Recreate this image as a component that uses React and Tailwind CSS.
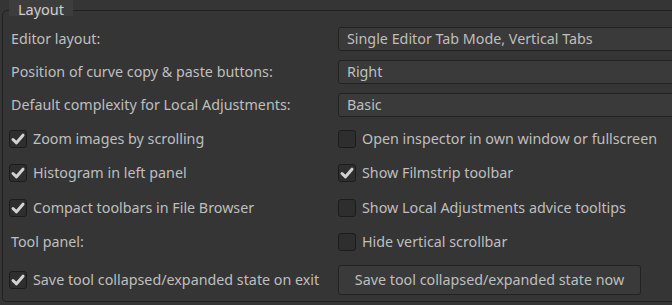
import React from "react";

function Check({ checked }) {
  return (
    <span className="flex h-[18px] w-[18px] shrink-0 items-center justify-center rounded-[3px] border border-[#1c1c1c] bg-[#2e2e2e]">
      {checked && (
        <svg width="16" height="16" viewBox="0 0 16 16">
          <path d="M3 8.5 L6.5 11.8 L13 4.2" fill="none" stroke="#d2d2d2" strokeWidth="3" strokeLinecap="round" strokeLinejoin="round" />
        </svg>
      )}
    </span>
  );
}

function CheckRow({ checked, label }) {
  return (
    <div className="flex items-center gap-[6px]">
      <Check checked={checked} />
      <span className="whitespace-nowrap">{label}</span>
    </div>
  );
}

function Combo({ value }) {
  return (
    <div className="flex h-[24px] w-[400px] items-center rounded-[3px] border border-[#222] bg-[#3a3a3a] pl-[8px] whitespace-nowrap">
      {value}
    </div>
  );
}

export default function App() {
  return (
    <div
      className="relative h-[305px] w-[672px] overflow-hidden bg-[#353535] text-[14.3px] text-[#bfbfbf]"
      style={{ fontFamily: '"Noto Sans", "Open Sans", sans-serif' }}
    >
      <div className="ml-[2px] mt-[10px] flex h-[292px] w-[720px] flex-col rounded-tl-[5px] rounded-bl-[4px] border border-[#222] pl-[6px] pt-[11px]">
        <div className="grid grid-cols-[329px_1fr]">
          <div className="flex h-[33px] items-center pl-[2px]">Editor layout:</div>
          <div className="flex h-[33px] items-center"><Combo value="Single Editor Tab Mode, Vertical Tabs" /></div>
          <div className="flex h-[33px] items-center pl-[2px]">Position of curve copy &amp; paste buttons:</div>
          <div className="flex h-[33px] items-center"><Combo value="Right" /></div>
          <div className="flex h-[33px] items-center pl-[2px]">Default complexity for Local Adjustments:</div>
          <div className="flex h-[33px] items-center"><Combo value="Basic" /></div>

          <div className="flex h-[35px] items-center"><CheckRow checked label="Zoom images by scrolling" /></div>
          <div className="flex h-[35px] items-center"><CheckRow label="Open inspector in own window or fullscreen" /></div>
          <div className="flex h-[34px] items-center"><CheckRow checked label="Histogram in left panel" /></div>
          <div className="flex h-[34px] items-center"><CheckRow checked label="Show Filmstrip toolbar" /></div>
          <div className="flex h-[35px] items-center"><CheckRow checked label="Compact toolbars in File Browser" /></div>
          <div className="flex h-[35px] items-center"><CheckRow label="Show Local Adjustments advice tooltips" /></div>
          <div className="flex h-[34px] items-center pl-[2px]">Tool panel:</div>
          <div className="flex h-[34px] items-center"><CheckRow label="Hide vertical scrollbar" /></div>
          <div className="flex h-[42px] items-center"><CheckRow checked label="Save tool collapsed/expanded state on exit" /></div>
          <div className="flex h-[42px] items-center">
            <button className="flex h-[30px] w-[303px] items-center justify-center rounded-[3px] border border-[#222] bg-[#3a3a3a] whitespace-nowrap">
              Save tool collapsed/expanded state now
            </button>
          </div>
        </div>
      </div>
      <div className="absolute left-[9px] top-0 flex h-[16px] w-[64px] items-end justify-center bg-[#3d3d3d] text-[14.5px] leading-[18px] text-[#cfcfcf]">
        <span className="-mb-[2px]">Layout</span>
      </div>
    </div>
  );
}
